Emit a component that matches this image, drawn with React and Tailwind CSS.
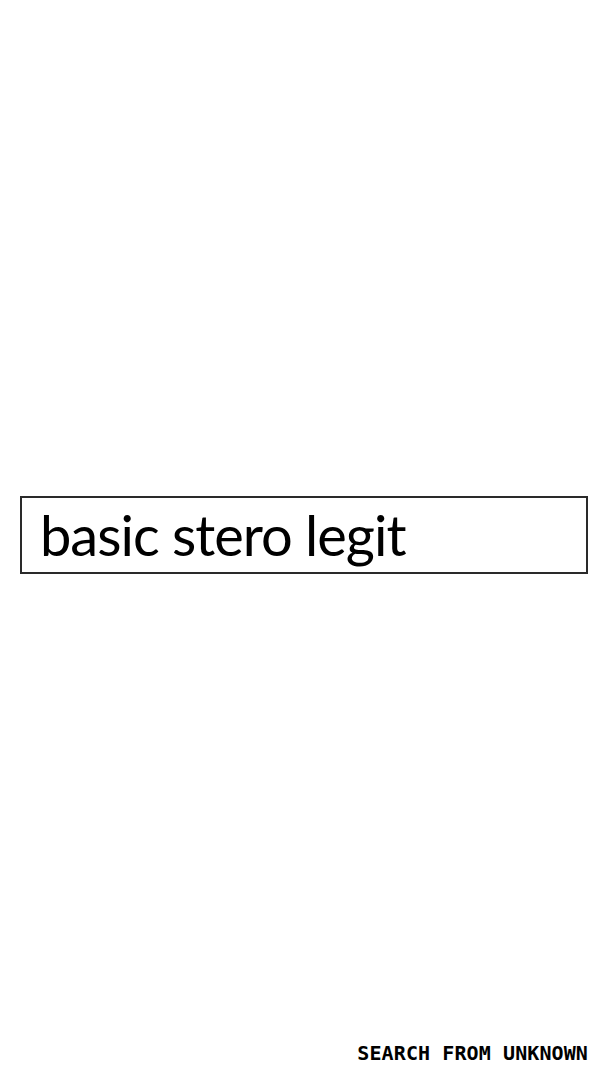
import { useState } from 'react'

export default function App() {
  const [query, setQuery] = useState('basic stero legit')

  return (
    <div className="relative h-screen w-full bg-white flex flex-col">
      <div className="flex-1 flex items-center px-5">
        <input
          value={query}
          onChange={(e) => setQuery(e.target.value)}
          className="w-full h-[78px] mt-[-10px] border-2 border-[#2a2a2a] pl-[18px] text-[56px] tracking-[-1px] text-black outline-none font-['Lato',sans-serif]"
        />
      </div>
      <div className="absolute right-5 bottom-[17px] leading-[20px] text-[20px] font-bold tracking-[0.1px] text-black font-['DejaVu_Sans_Mono',monospace]">
        SEARCH FROM UNKNOWN
      </div>
    </div>
  )
}
